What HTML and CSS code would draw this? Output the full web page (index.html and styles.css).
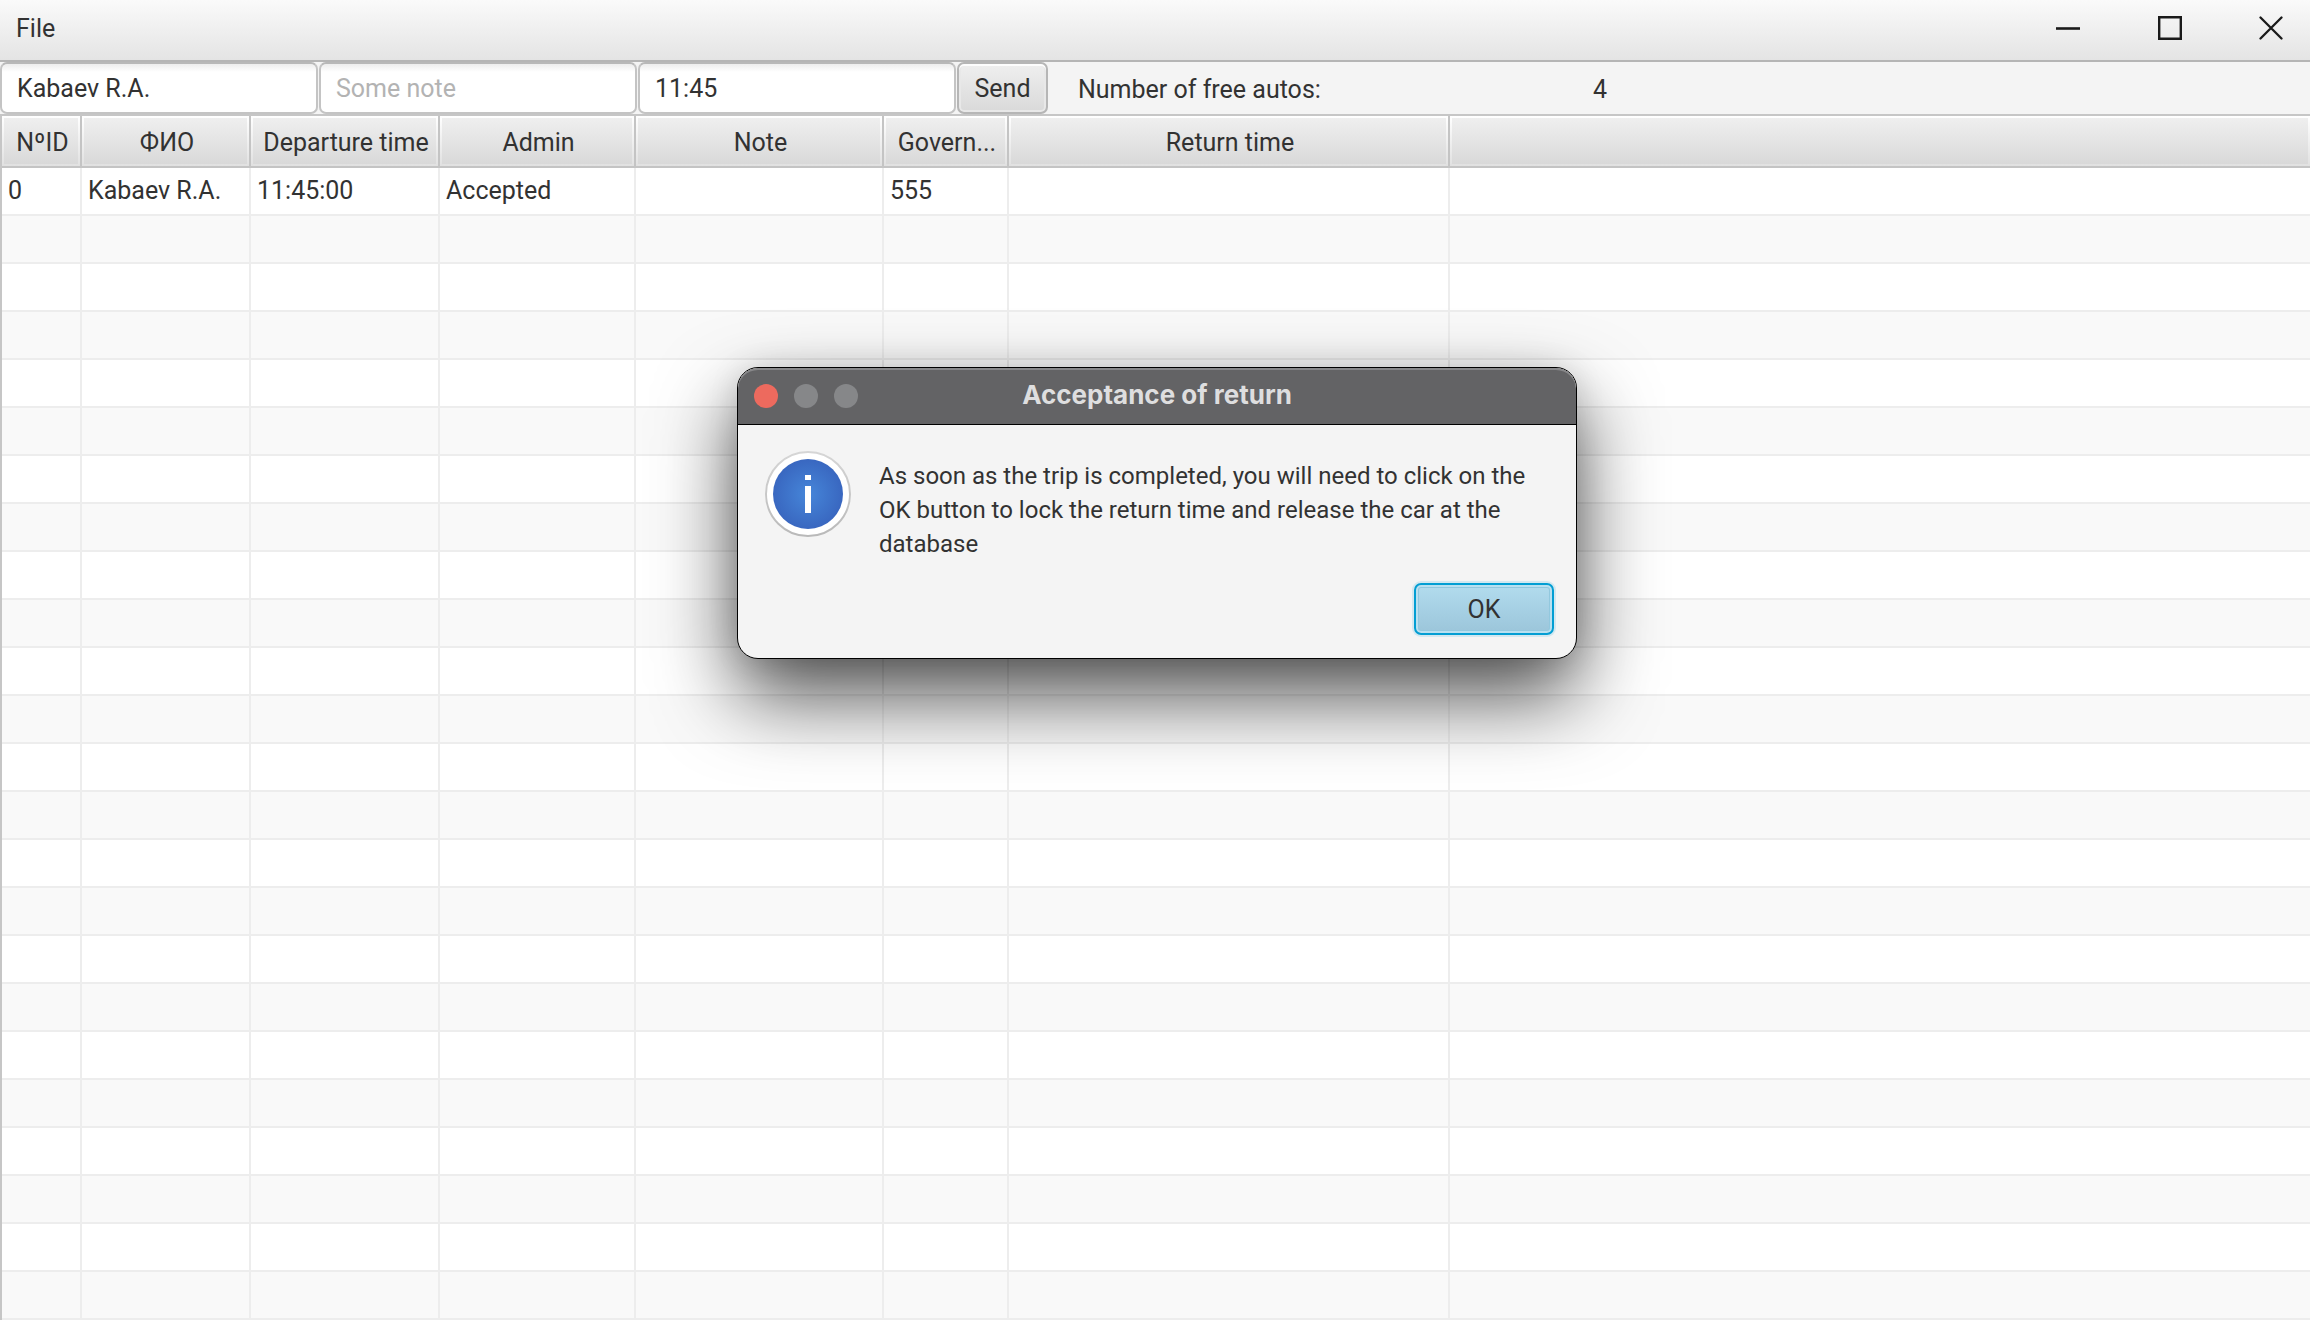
FILE: index.html
```
<!DOCTYPE html>
<html lang="en">
<head>
<meta charset="utf-8">
<meta name="viewport" content="width=device-width, initial-scale=1">
<title>Trips</title>
<link rel="stylesheet" href="styles.css">
</head>
<body>
<div class="app">
  <header class="menubar">
    <nav><button type="button" class="menu">File</button></nav>
    <div class="window-controls">
      <button type="button" aria-label="Minimize"><svg width="24" height="24" viewBox="0 0 24 24"><path d="M0 12.5h24" stroke-width="2.6"/></svg></button>
      <button type="button" aria-label="Maximize"><svg width="24" height="24" viewBox="0 0 24 24"><path d="M1.2 1.2h21.6v21.6H1.2z" stroke-width="2.4"/></svg></button>
      <button type="button" aria-label="Close"><svg width="24" height="24" viewBox="0 0 24 24"><path d="M1.5 1.5l21 21M22.500 1.500l-21 21" stroke-width="2.3" stroke-linecap="round"/></svg></button>
    </div>
  </header>

  <form class="toolbar" onsubmit="return false">
    <input class="field" type="text" value="Kabaev R.A." aria-label="Name">
    <input class="field" type="text" placeholder="Some note" aria-label="Note">
    <input class="field" type="text" value="11:45" aria-label="Departure time">
    <button type="submit" class="button">Send</button>
    <label class="free-label" for="free">Number of free autos:</label>
    <output id="free" class="free-count">4</output>
  </form>

  <main class="grid">
    <table>
      <colgroup>
        <col class="c-id"><col class="c-name"><col class="c-departure"><col class="c-admin"><col class="c-note"><col class="c-number"><col class="c-return"><col>
      </colgroup>
      <thead>
        <tr><th>NºID</th><th>ФИО</th><th>Departure time</th><th>Admin</th><th>Note</th><th>Govern...</th><th>Return time</th><th></th></tr>
      </thead>
      <tbody>
        <tr><td>0</td><td>Kabaev R.A.</td><td>11:45:00</td><td>Accepted</td><td></td><td>555</td><td></td><td></td></tr>
        <tr><td></td><td></td><td></td><td></td><td></td><td></td><td></td><td></td></tr>
        <tr><td></td><td></td><td></td><td></td><td></td><td></td><td></td><td></td></tr>
        <tr><td></td><td></td><td></td><td></td><td></td><td></td><td></td><td></td></tr>
        <tr><td></td><td></td><td></td><td></td><td></td><td></td><td></td><td></td></tr>
        <tr><td></td><td></td><td></td><td></td><td></td><td></td><td></td><td></td></tr>
        <tr><td></td><td></td><td></td><td></td><td></td><td></td><td></td><td></td></tr>
        <tr><td></td><td></td><td></td><td></td><td></td><td></td><td></td><td></td></tr>
        <tr><td></td><td></td><td></td><td></td><td></td><td></td><td></td><td></td></tr>
        <tr><td></td><td></td><td></td><td></td><td></td><td></td><td></td><td></td></tr>
        <tr><td></td><td></td><td></td><td></td><td></td><td></td><td></td><td></td></tr>
        <tr><td></td><td></td><td></td><td></td><td></td><td></td><td></td><td></td></tr>
        <tr><td></td><td></td><td></td><td></td><td></td><td></td><td></td><td></td></tr>
        <tr><td></td><td></td><td></td><td></td><td></td><td></td><td></td><td></td></tr>
        <tr><td></td><td></td><td></td><td></td><td></td><td></td><td></td><td></td></tr>
        <tr><td></td><td></td><td></td><td></td><td></td><td></td><td></td><td></td></tr>
        <tr><td></td><td></td><td></td><td></td><td></td><td></td><td></td><td></td></tr>
        <tr><td></td><td></td><td></td><td></td><td></td><td></td><td></td><td></td></tr>
        <tr><td></td><td></td><td></td><td></td><td></td><td></td><td></td><td></td></tr>
        <tr><td></td><td></td><td></td><td></td><td></td><td></td><td></td><td></td></tr>
        <tr><td></td><td></td><td></td><td></td><td></td><td></td><td></td><td></td></tr>
        <tr><td></td><td></td><td></td><td></td><td></td><td></td><td></td><td></td></tr>
        <tr><td></td><td></td><td></td><td></td><td></td><td></td><td></td><td></td></tr>
        <tr><td></td><td></td><td></td><td></td><td></td><td></td><td></td><td></td></tr>
      </tbody>
    </table>
  </main>
</div>

<section class="dialog" role="dialog" aria-labelledby="dialog-title">
  <header class="titlebar">
    <div class="lights">
      <button type="button" class="light light-close" aria-label="Close"></button>
      <button type="button" class="light" aria-label="Minimize" disabled></button>
      <button type="button" class="light" aria-label="Zoom" disabled></button>
    </div>
    <h1 id="dialog-title">Acceptance of return</h1>
  </header>
  <div class="dialog-body">
    <svg class="info" width="86" height="86" viewBox="0 0 86 86" aria-hidden="true">
      <defs>
        <radialGradient id="blue"><stop offset="0" stop-color="#4686d9"/><stop offset="1" stop-color="#3967c0"/></radialGradient>
        <linearGradient id="rim" x2="0" y2="1"><stop offset="0" stop-color="#d6d6d6"/><stop offset="1" stop-color="#b9b9b9"/></linearGradient>
      </defs>
      <circle cx="43" cy="43" r="42" fill="#fff" stroke="url(#rim)" stroke-width="2"/>
      <circle cx="43" cy="43" r="35" fill="url(#blue)"/>
      <path d="M40 24h6v5h-6zM40 35h6v27h-6z" fill="#fff"/>
    </svg>
    <p>As soon as the trip is completed, you will need to click on the OK button to lock the return time and release the car at the database</p>
  </div>
  <footer><button type="button" class="ok">OK</button></footer>
</section>
</body>
</html>
```
FILE: styles.css
```
* { box-sizing: border-box; }

body {
  margin: 0;
  color: #323232;
  background: #f4f4f4;
  font: 25px/34px Roboto, "Noto Sans", sans-serif;
}

button, input { font: inherit; color: inherit; }

.app {
  display: flex;
  flex-direction: column;
  height: 100vh;
  overflow: hidden;
}

/* Menu bar */
.menubar {
  display: flex;
  justify-content: space-between;
  align-items: center;
  height: 62px;
  padding-bottom: 4px;
  border-bottom: 2px solid #b5b5b5;
  background: linear-gradient(#fafafa, #e4e4e4);
}

.menu {
  padding: 2px 16px 0;
  border: 0;
  background: none;
}

.window-controls {
  display: flex;
  gap: 2px;
}

.window-controls button {
  display: flex;
  justify-content: center;
  width: 100px;
  padding: 0;
  border: 0;
  background: none;
}

.window-controls button:last-child {
  width: 78px;
  margin-left: 10px;
}

.window-controls svg {
  fill: none;
  stroke: #1a1a1a;
}

/* Input row */
.toolbar {
  display: flex;
  align-items: center;
  gap: 1px;
  height: 52px;
}

.field {
  width: 318px;
  height: 52px;
  padding: 0 15px;
  border: 2px solid #c4c4c4;
  border-top-color: #b8b8b8;
  border-radius: 7px;
  background: linear-gradient(#ededed, #fff 8px);
  outline: 0;
}

.field::placeholder { color: #b3b3b3; opacity: 1; }

.button {
  width: 91px;
  height: 52px;
  padding: 2px 0 0;
  border: 2px solid #b6b6b6;
  border-radius: 7px;
  background: linear-gradient(#efefef, #d9d9d9);
  box-shadow: inset 0 2px #fdfdfd, inset 0 0 0 2px #e8e8e8;
}

.free-label {
  width: 514px;
  margin-left: 29px;
  padding-top: 4px;
}

.free-count { padding-top: 4px; }

/* Table */
.grid {
  flex: 1;
  overflow: hidden;
  border-top: 2px solid #c6c6c6;
  border-left: 2px solid #c6c6c6;
  background: #fff;
}

table {
  width: 100%;
  table-layout: fixed;
  border-collapse: separate;
  border-spacing: 0;
}

.c-id { width: 80px; }
.c-name { width: 169px; }
.c-departure { width: 189px; }
.c-admin { width: 196px; }
.c-note { width: 248px; }
.c-number { width: 125px; }
.c-return { width: 441px; }

th {
  height: 52px;
  padding: 3px 0 0 3px;
  border-right: 2px solid #c4c4c4;
  border-bottom: 2px solid #c4c4c4;
  font-weight: 400;
  white-space: nowrap;
  background:
    linear-gradient(#efefef, #d9d9d9) center / calc(100% - 4px) calc(100% - 4px) no-repeat,
    linear-gradient(#fff, #e1e1e1);
}

td {
  height: 48px;
  padding: 0 6px;
  border-right: 2px solid #ededed;
  border-bottom: 2px solid #ededed;
  white-space: nowrap;
}

th:last-child, td:last-child { border-right: 0; }

tbody tr:nth-child(even) { background: #f9f9f9; }

/* Message window, floating over the main window */
.dialog {
  position: absolute;
  top: 367px;
  left: 737px;
  width: 840px;
  border: 1px solid #000;
  border-radius: 21px;
  background: #f4f4f4;
  overflow: hidden;
  box-shadow: 0 36px 80px rgba(0, 0, 0, .7), 0 0 30px rgba(0, 0, 0, .1);
}

.titlebar {
  display: grid;
  grid-template-columns: 1fr auto 1fr;
  align-items: center;
  height: 57px;
  padding: 0 16px;
  border-bottom: 1px solid #000;
  border-radius: 20px 20px 0 0;
  background: #636365;
  box-shadow: inset 0 2px #88888a;
  color: #dededf;
}

.titlebar h1 {
  margin: 0;
  padding-bottom: 2px;
  font: 700 26px/34px Inter, "Noto Sans", sans-serif;
}

.lights {
  display: flex;
  gap: 16px;
}

.light {
  width: 24px;
  height: 24px;
  padding: 0;
  border: 0;
  border-radius: 50%;
  background: #868789;
}

.light-close { background: #ed6a5e; }

.dialog-body {
  display: flex;
  gap: 28px;
  padding: 26px 27px 0;
}

.info { flex: none; }

.dialog-body p {
  margin: 8px 0 0;
  font-size: 24px;
}

.dialog footer {
  display: flex;
  justify-content: flex-end;
  padding: 22px 22px 23px;
}

.ok {
  width: 140px;
  height: 52px;
  padding: 2px 0 0;
  border: 2px solid #039ed3;
  border-radius: 7px;
  background: linear-gradient(#b2dcee, #9bc5da);
  box-shadow: 0 0 0 2px #d3e8f0, inset 0 0 0 2px #b9e0f0, inset 0 0 0 3px #92c8de;
}
```
